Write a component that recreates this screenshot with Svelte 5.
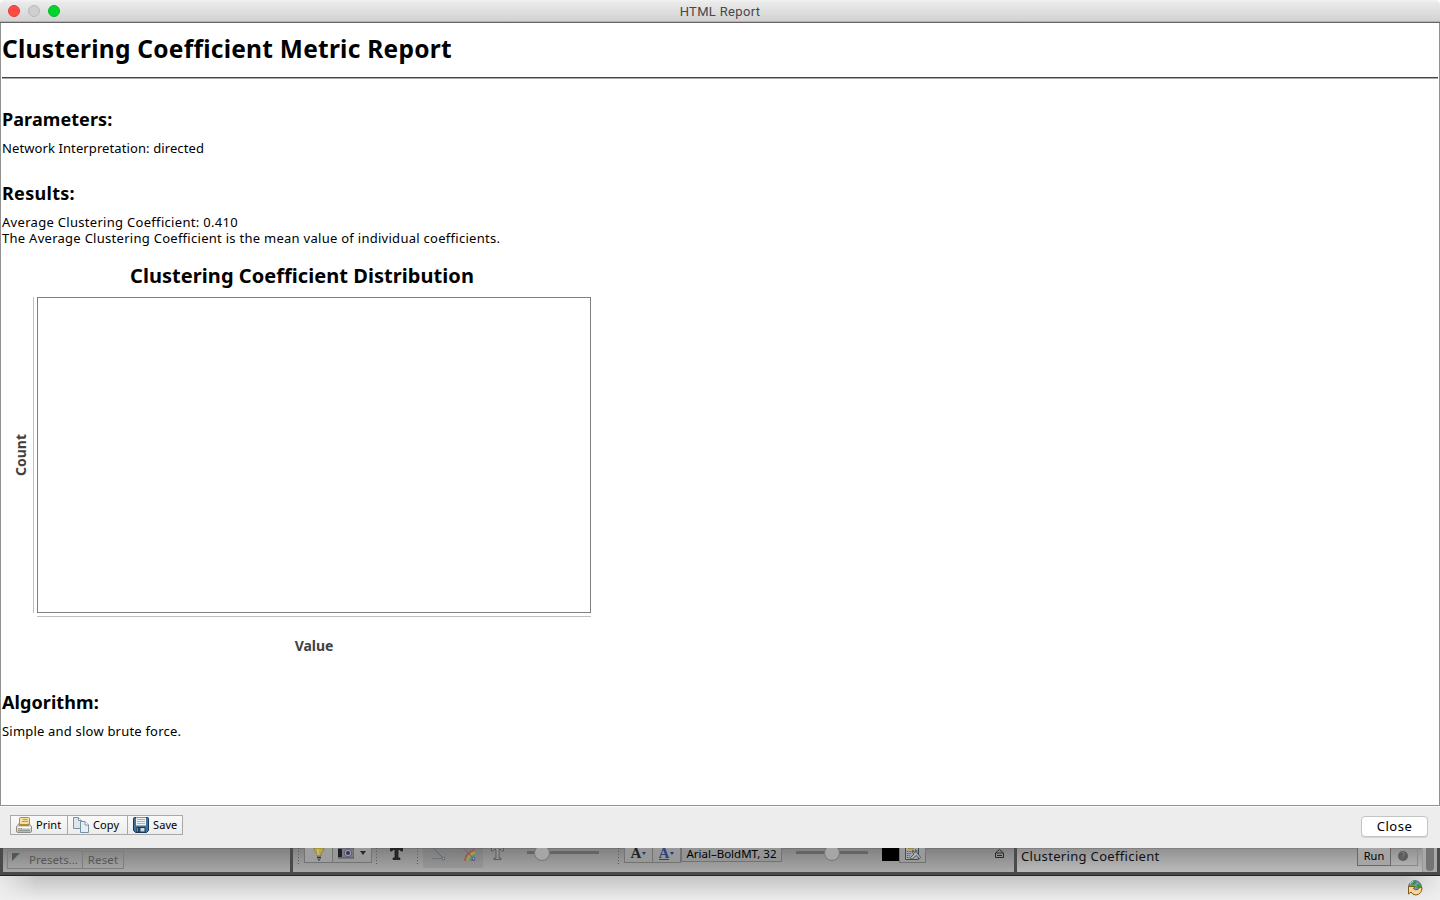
<script>
  const tools = [
    { kind: 'print', label: 'Print', w: 58 },
    { kind: 'copy', label: 'Copy', w: 61 },
    { kind: 'save', label: 'Save', w: 56 }
  ];
</script>

<div class="screen">
  <header class="titlebar">
    <div class="lights"><i class="red"></i><i class="grey"></i><i class="green"></i></div>
    <span class="title">HTML Report</span>
  </header>

  <main class="report">
    <h1>Clustering Coefficient Metric Report</h1>
    <div class="rule"></div>
    <h2 class="params">Parameters:</h2>
    <p><span class="l1">Network Interpretation: directed</span></p>
    <h2 class="results">Results:</h2>
    <p><span class="l2">Average Clustering Coefficient: 0.410</span><br /><span class="l3">The Average Clustering Coefficient is the mean value of individual coefficients.</span></p>
    <figure class="chart">
      <figcaption>Clustering Coefficient Distribution</figcaption>
      <div class="row">
        <span class="ylabel">Count</span>
        <div class="yaxis"></div>
        <div class="plot"></div>
      </div>
      <div class="xaxis"></div>
      <span class="xlabel">Value</span>
    </figure>
    <h2 class="algo">Algorithm:</h2>
    <p><span class="l4">Simple and slow brute force.</span></p>
  </main>

  <footer class="actions">
    <div class="group">
      {#each tools as t}
        <button class="tool" style="width:{t.w}px">
          <svg width="18" height="18" viewBox="0 0 18 18">
            {#if t.kind === 'print'}
              <path d="M4.500 8.500V2.500q0-1 1-1h8q1 0 1 1v6z" fill="#f6dfa0" stroke="#b98d34" />
              <path d="M8 3.500h4.500M7 5.500h6" stroke="#c39a45" />
              <path d="M1.500 11q0-1 1-1.500L4 7.500V9.500h10V7.500l1.500 2q1 .5 1 1.500v4q0 1.500-1.500 1.500H3q-1.500 0-1.500-1.500z" fill="#d9d9d7" stroke="#8d8f8b" />
              <path d="M2.500 11.500h13" stroke="#fff" />
              <path d="M5 9.500h8" stroke="#8a8a88" />
              <path d="M3 14.500h12" stroke="#979995" stroke-width="2" />
              <path d="M3 12.500h2" stroke="#e58a62" /><path d="M5.500 12.500h1.500" stroke="#68b28a" />
            {:else if t.kind === 'copy'}
              <path d="M1.500 1.500h5l3 3v8h-8z" fill="#dce6ee" stroke="#7890a5" />
              <path d="M6.500 1.500v3h3" fill="#fff" stroke="#7890a5" />
              <path d="M8.500 5.500h4.500l3.500 3.500v7.500h-8z" fill="#e6eef4" stroke="#7890a5" />
              <path d="M13 5.500v3.500h3.500" fill="#fff" stroke="#7890a5" />
            {:else}
              <path d="M1.500 2.500q0-1 1-1h13q1 0 1 1v12l-2 2h-11l-2-2z" fill="#3f7199" stroke="#173a5c" />
              <path d="M4 1.500h10v8h-10z" fill="#edf1f3" />
              <path d="M5 3.500h8M5 5.500h8M5 7.500h8" stroke="#abb5bc" />
              <path d="M5 11.500h8v4.500h-8z" fill="#d2d8dc" stroke="#1d3854" />
              <path d="M6 12h2.500v4h-2.500z" fill="#244667" />
            {/if}
          </svg>
          <span>{t.label}</span>
        </button>
      {/each}
    </div>
    <button class="close">Close</button>
  </footer>

  <section class="under">
    <div class="panel left">
      <div class="box presets"><svg width="9" height="9"><path d="M0 0h8L0 8z" fill="#555" /></svg><span>Presets...</span></div>
      <div class="box reset">Reset</div>
    </div>
    <div class="panel mid">
      <i class="dots d1"></i>
      <div class="box bulb">
        <svg width="12" height="13" viewBox="0 0 12 13"><path d="M1 0Q1 3 4 5.500V8h4V5.500Q11 3 11 0z" fill="#b7a94b" stroke="#837829" stroke-width=".8" /><path d="M5 1v6" stroke="#d7cd84" /><path d="M4 8h4v3.500h-4z" fill="#73777b" /><path d="M4 9.500h4M5 12h2" stroke="#333" /></svg>
      </div>
      <div class="box camera">
        <svg width="16" height="11" viewBox="0 0 16 11"><path d="M0 0h16v10h-16z" fill="#7b7b82" stroke="#55555c" /><path d="M0 1h4v8h-4z" fill="#202024" /><circle cx="10" cy="5" r="3.800" fill="#9c9ca8" stroke="#5b5b70" /><circle cx="10" cy="5" r="2" fill="#303268" /></svg>
        <svg class="down" width="6" height="4"><path d="M0 0h6L3 4z" fill="#222b2b" /></svg>
      </div>
      <i class="dots d2"></i>
      <svg class="t1" width="15" height="13" viewBox="0 0 15 13"><path d="M1.500 0h12v3h-1.500l-1-1.500h-2v8.500h2v1.500h-7v-1.500h2v-8.500h-2l-1 1.500h-1.500z" fill="#29292b" stroke="#1a1a1c" stroke-width=".8" /></svg>
      <i class="dots d3"></i>
      <div class="shade">
        <svg width="60" height="20" viewBox="0 0 60 20"><path d="M9 10.500h10" stroke="#727272" /><path d="M10 0l9.500 9.500" stroke="#486b8b" /><circle cx="20.500" cy="10.500" r="1.300" fill="#aab7c2" stroke="#345c83" /><path d="M41 13Q42 4 50 1h2v12z" fill="#9a5d58" /><path d="M43 13Q44 5.500 52 3V13z" fill="#a3985a" /><path d="M45.500 13Q46.500 7.500 52 6V13z" fill="#5c9482" /><path d="M48 13q0-3 4-4v4z" fill="#765d8b" /><path d="M40 0l9.500 9.500" stroke="#486b8b" /><circle cx="50.500" cy="10.500" r="1.300" fill="#aab7c2" stroke="#345c83" /></svg>
      </div>
      <svg class="t2" width="15" height="13" viewBox="0 0 15 13"><path d="M1.500 0h12v3h-1.500l-1-1.500h-2v8.500h2v1.500h-7v-1.500h2v-8.500h-2l-1 1.500h-1.500z" fill="#969696" stroke="#555" stroke-width=".9" /></svg>
      <div class="slider s1"><i></i></div>
      <i class="dots d4"></i>
      <div class="box fa"><b>A</b><i></i></div>
      <div class="box fa blue"><b>A</b><i></i></div>
      <div class="box font">Arial–BoldMT, 32</div>
      <div class="slider s2"><i></i></div>
      <div class="black"></div>
      <div class="box cfg">
        <svg width="17" height="13" viewBox="0 0 17 13"><path d="M1.500 0v11.500h13V0" fill="#a1a6a9" stroke="#3b4c5c" /><path d="M4 0h6v1H4z" fill="#a78229" /><path d="M3 3.500h5M3 5.500h4M3 7.500h3M3 9.500h3" stroke="#485f73" stroke-dasharray="1 .6" /><path d="M9 2q-2 3 1 4l-3.500 3.500q0 2 2 1.500L12 7.500l3.500 3q1.500-.5.5-2L13 5q.5-3-1.500-3.500l.5 2.500-2 .5z" fill="#b2b2b2" stroke="#444" stroke-width=".8" /></svg>
      </div>
      <svg class="eject" width="9" height="9" viewBox="0 0 9 9"><path d="M1 3.500L4.500.5 8 3.500M.5 4h8v4.500h-8zM2 6.500h5" fill="none" stroke="#292929" /></svg>
    </div>
    <div class="panel right">
      <span class="cc">Clustering Coefficient</span>
      <div class="box run">Run</div>
      <div class="box help"><i>?</i></div>
      <div class="scroll"><i></i></div>
    </div>
  </section>

  <div class="desktop">
    <svg width="16" height="16" viewBox="0 0 16 16"><circle cx="8" cy="7" r="6.300" fill="#6c9cc2" stroke="#3e627c" /><path d="M5 2q3-1.500 5-.5L8.500 4 6 5.500 4 5zM10 4l4 .5 0 3-2 2.500-2.500-3z" fill="#3e9a35" /><path d="M3 3.500q1.500-1.500 3-2" stroke="#dcecf7" fill="none" /><path d="M1.500 6.500h6.500L6.300 8.500q2.500 2.500 5.200.5l1-2 2.500.5q0 6.500-6 7.500-3.500 0-5-3L1.500 14z" fill="#f4d79b" stroke="#855716" /></svg>
  </div>
</div>

<style>
  :global(body) { margin: 0; overflow: hidden; }
  .screen { width: 1440px; height: 900px; display: flex; flex-direction: column; overflow: hidden; font-family: "Noto Sans", "Open Sans", sans-serif; color: #000; background: #fff; }
  .screen * { box-sizing: border-box; }
  button { font-family: inherit; margin: 0; color: #000; }
  .titlebar { height: 23px; flex: none; display: grid; grid-template-columns: 1fr auto 1fr; align-items: center; background: linear-gradient(#f4f4f4 0, #ebebeb 2px, #d2d2d2 21px); border-bottom: 1px solid #666; box-shadow: inset 0 -1px #b4b4b4; border-radius: 5px 5px 0 0; }
  .lights { display: flex; gap: 8px; padding-left: 8px; }
  .lights i { width: 12px; height: 12px; border-radius: 50%; border: 1px solid; }
  .red { background: #ff4b43; border-color: #e53c37 !important; }
  .grey { background: #cfcfcf; border-color: #b9b9b9 !important; }
  .green { background: #00d42d; border-color: #07b924 !important; }
  .title { font: 13px/20px Roboto, sans-serif; color: #484848; letter-spacing: .33px; padding-top: 1px; }
  .report { height: 783px; flex: none; border: 1px solid #929292; border-top: 0; padding: 0 1px; background: #fff; }
  h1, h2, p, figure { margin: 0; white-space: nowrap; }
  h1 { font-size: 24.500px; line-height: 34px; padding-top: 9px; letter-spacing: .25px; }
  .rule { height: 2px; margin-top: 11px; background: linear-gradient(#444 50%, #aaa 50%); }
  h2 { font-size: 18px; line-height: 24px; letter-spacing: .08px; }
  .params { margin-top: 28px; }
  p { font-size: 13px; line-height: 16px; margin-top: 9px; }
  .results { margin-top: 25px; letter-spacing: .3px; }
  .l1 { letter-spacing: .1px; }
  .l2 { letter-spacing: .3px; }
  .l3 { letter-spacing: .275px; }
  .l4 { letter-spacing: .2px; }
  .chart { width: 600px; height: 410px; margin-top: 17px; display: flex; flex-direction: column; }
  figcaption { font-size: 20px; font-weight: 700; line-height: 26px; height: 34px; text-align: center; letter-spacing: .05px; }
  .row { display: flex; height: 316px; }
  .ylabel { width: 24px; margin-left: 7px; writing-mode: vertical-rl; transform: rotate(180deg); text-align: center; line-height: 24px; font-size: 14px; font-weight: 700; color: #404040; letter-spacing: 0; }
  .yaxis { width: 1px; background: #c0c0c0; margin-right: 3px; }
  .plot { width: 554px; border: 1px solid #808080; }
  .xaxis { width: 554px; height: 1px; margin: 3px 0 0 35px; background: #c0c0c0; }
  .xlabel { width: 554px; margin: 19px 0 0 35px; text-align: center; font-size: 14px; line-height: 20px; font-weight: 700; color: #404040; letter-spacing: -.1px; }
  .algo { margin-top: 17px; }
  .actions { height: 42px; flex: none; background: #ededed; border-top: 1px solid #fbfbfb; display: flex; justify-content: space-between; padding: 8px 12px 0 10px; }
  .group { display: flex; height: 20px; }
  .tool { border: 1px solid #a9a9a9; margin-right: -1px; padding: 0 0 0 4px; display: flex; align-items: center; gap: 3px; background: linear-gradient(#fafafa, #ececec); font-size: 11px; height: 20px; letter-spacing: .1px; }
  .tool svg { flex: none; }
  .tool span { padding-bottom: 2px; }
  .close { width: 67px; height: 21px; margin-top: 1px; border: 1px solid #c4c4c4; border-radius: 4px; background: #fff; font-size: 13px; line-height: 16px; padding: 0 0 2px; letter-spacing: .5px; box-shadow: 0 1px #d3d3d3; }
  .under { height: 28px; flex: none; display: flex; gap: 3px; padding: 0 3px 3px; background: #4a4a4a; border-bottom: 1px solid #242424; }
  .panel { height: 24px; display: flex; align-items: flex-start; background: linear-gradient(#666 0, #828282 1px, #a8a8a8 24px); }
  .left { width: 287px; padding-left: 4px; font-size: 11.500px; color: #565656; }
  .mid { width: 721px; }
  .right { flex: 1; background: linear-gradient(#707070 0, #929292 1px, #bbb 24px); }
  .box { flex: none; border: 1px solid #737373; border-top: 0; display: flex; justify-content: center; }
  .presets { width: 76px; height: 19px; margin-top: 2px; border-top: 1px solid #7e7e7e; gap: 8px; padding: 2px 0 0; border-color: #7e7e7e; }
  .presets span { line-height: 13px; }
  .reset { width: 41px; height: 18px; margin-top: 3px; border: 1px solid #7e7e7e; line-height: 16px; border-left: 0; letter-spacing: .1px; }
  .dots { flex: none; width: 1px; height: 17px; background: repeating-linear-gradient(#5a5a5a 0 1px, transparent 1px 3px); }
  .d1 { margin-left: 5px; } .d2 { margin-left: 4px; } .d3 { margin-left: 12px; } .d4 { margin-left: 19px; }
  .bulb { width: 29px; height: 15px; margin-left: 5px; background: #9e9e9e; }
  .camera { width: 39px; height: 15px; border-left: 0; align-items: flex-start; gap: 6px; background: #999; }
  .down { margin-top: 3px; }
  .t1 { margin-left: 12px; margin-right: 1px; flex: none; }
  .shade { margin-left: 5px; width: 60px; height: 20px; background: rgba(70,70,70,.12); }
  .t2 { margin-left: 7px; margin-right: 1px; flex: none; }
  .slider { display: flex; width: 72px; height: 14px; flex: none; background: linear-gradient(transparent 3px, #646464 3px 6px, transparent 6px); }
  .slider i { display: block; width: 16px; height: 16px; border-radius: 50%; margin-top: -3px; background: #a6a6a6; border: 1px solid #777; clip-path: inset(3px 0 0 0); }
  .s1 { margin-left: 21px; } .s1 i { margin-left: 7px; }
  .s2 { margin-left: 14px; } .s2 i { margin-left: 28px; }
  .fa { width: 28px; height: 15px; background: #989898; font: 15px/11px "Liberation Serif", serif; gap: 1px; color: #222; }
  .fa:not(.blue) { margin-left: 5px; width: 29px; }
  .fa.blue { border-left: 0; color: #2c4384; }
  .fa.blue b { height: 12px; border-bottom: 1px solid #2c4384; }
  .fa b { font-weight: 700; }
  .fa i { border: 2px solid transparent; border-top: 3px solid #23387c; height: 3px; margin-top: 4px; }
  .font { width: 101px; height: 14px; font-size: 11.500px; line-height: 11px; white-space: nowrap; background: #949494; }
  .black { width: 17px; height: 13px; margin-left: 14px; background: #000; flex: none; }
  .cfg { width: 27px; height: 15px; background: #9a9a9a; }
  .eject { margin-left: 69px; margin-top: 1px; flex: none; }
  .cc { width: 336px; padding-left: 4px; font-size: 13px; line-height: 17px; letter-spacing: .33px; color: #111; flex: none; }
  .run { width: 34px; height: 18px; margin-left: 4px; font-size: 11px; line-height: 16px; background: #a5a5a5; border-color: #686868; }
  .help { width: 27px; height: 18px; border-left: 0; border-color: #888; }
  .help i { width: 10px; height: 10px; margin-top: 3px; margin-right: 2px; border-radius: 50%; background: #5d5d5d; color: #888; font: 8px/10px "Noto Sans", sans-serif; text-align: center; }
  .scroll { flex: 1; margin-left: 4px; height: 24px; background: #a9a9a9; border-left: 1px solid #999; padding-left: 3px; }
  .scroll i { display: block; width: 8px; height: 23px; border-radius: 0 0 4px 4px; background: #747474; }
  .desktop { height: 24px; flex: none; background: linear-gradient(90deg, rgba(240,240,240,.8), transparent 36px calc(100% - 36px), rgba(240,240,240,.8)), linear-gradient(#c4c4c4, #ececec); display: flex; justify-content: flex-end; align-items: flex-start; padding: 4px 17px 0 0; }
</style>
